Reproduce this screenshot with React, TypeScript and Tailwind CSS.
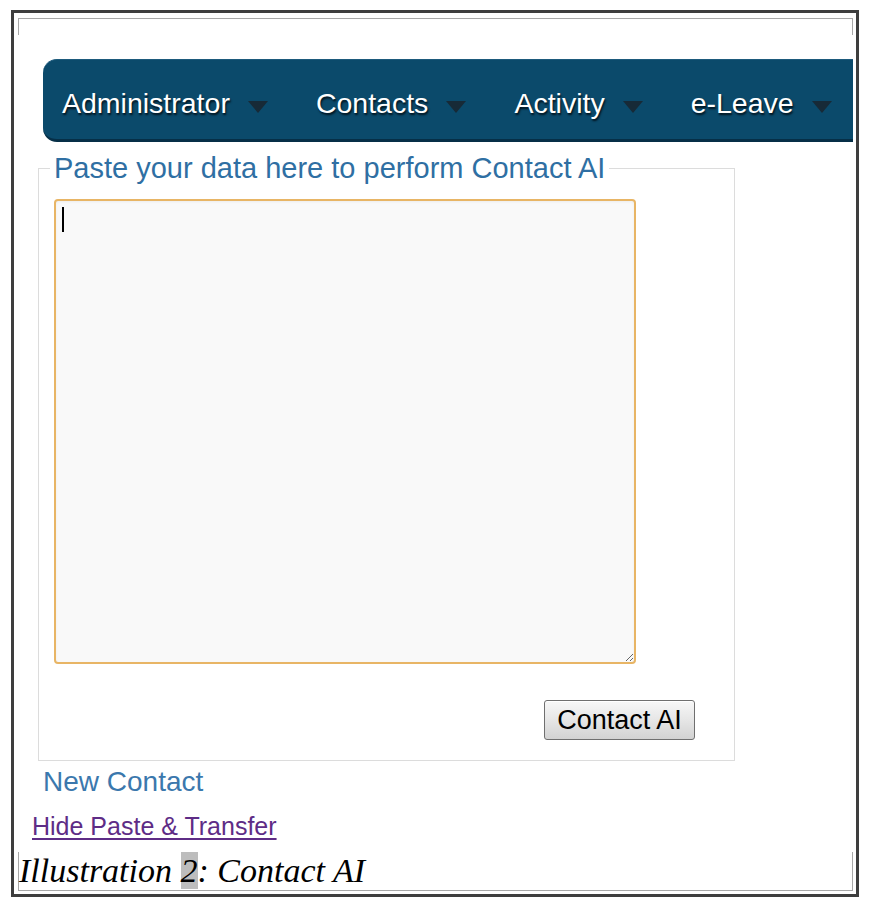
import React from 'react'

const MENU = ['Administrator', 'Contacts', 'Activity', 'e-Leave']

function Caret() {
  return (
    <div className="ml-[18px] mt-[7px] h-0 w-0 border-x-[10px] border-t-[12px] border-x-transparent border-t-[#172a37]" />
  )
}

export default function App() {
  return (
    <div className="w-[870px] h-[911px] overflow-hidden bg-white pl-[11px] pt-[10px] font-['Liberation_Sans',Arial,sans-serif]">
      <div className="w-[848px] h-[887px] border-[3px] border-[#3e3e3e]">
        {/* top corner marks of the document frame */}
        <div className="ml-[4px] mr-[3px] mt-[5px] h-[17px] border-x border-t border-[#a8a8a8]" />

        {/* top menu */}
        <nav className="ml-[29px] mt-[24px] h-[83px] w-[810px] rounded-l-[14px] border-t border-b-[3px] border-t-[#1d5a7c] border-b-[#062f47] bg-[#0b4a6b] pl-[19px] pt-[27px]">
          <ul className="flex h-[32px] items-center">
            {MENU.map((item, i) => (
              <li key={item} className={`flex items-center ${i > 0 ? 'ml-[48px]' : ''}`}>
                <span className="text-[28.5px] leading-[32px] text-white [text-shadow:1px_2px_2px_#02121c]">
                  {item}
                </span>
                <Caret />
              </li>
            ))}
          </ul>
        </nav>

        {/* paste box */}
        <fieldset className="ml-[24px] mt-[10px] w-[697px] border border-[#dcdcdc] pt-[15px] pb-[20px]">
          <legend className="ml-[11px] px-[4px] text-[29px] leading-[32px] text-[#2f6fa3]">
            Paste your data here to perform Contact AI
          </legend>
          <div className="flex flex-col items-start pl-[15px] pr-[39px]">
            <div className="relative">
              <textarea className="block h-[465px] w-[582px] rounded-[4px] border-2 border-[#e8b565] bg-[#f9f9f9] shadow-[inset_0_1px_3px_rgba(0,0,0,0.05)] outline-none" />
              <span className="absolute left-[8px] top-[8px] h-[25px] w-[2px] bg-black" />
            </div>
            <button className="mt-[36px] self-end h-[40px] w-[151px] rounded-[3px] border border-[#6f6f6f] bg-linear-to-b from-[#f7f7f7] via-[#e6e6e6] to-[#d2d2d2] text-[27px] leading-[38px] text-black shadow-[inset_0_1px_0_#fff]">
              Contact AI
            </button>
          </div>
        </fieldset>

        <div className="ml-[29px] mt-[5px] text-[28px] leading-[32px] text-[#3b78ad]">New Contact</div>

        <a href="#" className="ml-[18px] mt-[14px] block w-fit text-[25px] leading-[28px] text-[#5e2c86] underline underline-offset-[3px]">
          Hide Paste &amp; Transfer
        </a>

        {/* caption, inside the bottom corner marks of the frame */}
        <div className="ml-[4px] mr-[3px] mt-[12px] h-[39px] border-x border-b border-[#a8a8a8]">
          <p className="font-['Liberation_Serif','Times_New_Roman',serif] text-[34px] italic leading-[38px] text-black">
            Illustration <span className="bg-[#bdbdbd]">2</span>: Contact AI
          </p>
        </div>
      </div>
    </div>
  )
}
